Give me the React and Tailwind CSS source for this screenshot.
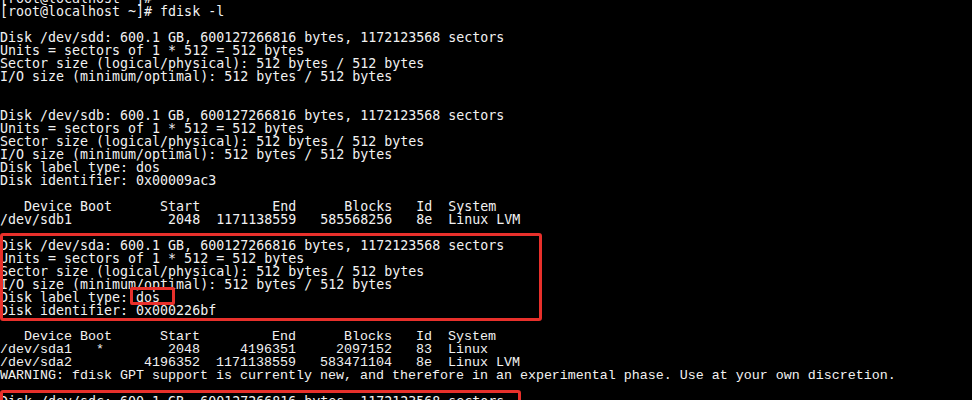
import React from "react";

const top = [
  "[root@localhost ~]#",
  "[root@localhost ~]# fdisk -l",
  "",
  "Disk /dev/sdd: 600.1 GB, 600127266816 bytes, 1172123568 sectors",
  "Units = sectors of 1 * 512 = 512 bytes",
  "Sector size (logical/physical): 512 bytes / 512 bytes",
  "I/O size (minimum/optimal): 512 bytes / 512 bytes",
  "",
  "",
  "Disk /dev/sdb: 600.1 GB, 600127266816 bytes, 1172123568 sectors",
  "Units = sectors of 1 * 512 = 512 bytes",
  "Sector size (logical/physical): 512 bytes / 512 bytes",
  "I/O size (minimum/optimal): 512 bytes / 512 bytes",
  "Disk label type: dos",
  "Disk identifier: 0x00009ac3",
  "",
  "   Device Boot      Start         End      Blocks   Id  System",
  "/dev/sdb1            2048  1171138559   585568256   8e  Linux LVM",
  "",
  "Disk /dev/sda: 600.1 GB, 600127266816 bytes, 1172123568 sectors",
  "Units = sectors of 1 * 512 = 512 bytes",
  "Sector size (logical/physical): 512 bytes / 512 bytes",
  "I/O size (minimum/optimal): 512 bytes / 512 bytes",
  "Disk label type: dos",
  "Disk identifier: 0x000226bf",
  "",
];

const narrow = [
  "   Device Boot      Start         End      Blocks   Id  System",
  "/dev/sda1   *        2048     4196351     2097152   83  Linux",
  "/dev/sda2         4196352  1171138559   583471104   8e  Linux LVM",
  "WARNING: fdisk GPT support is currently new, and therefore in an experimental phase. Use at your own discretion.",
];

const bottom = [
  "",
  "Disk /dev/sdc: 600.1 GB, 600127266816 bytes, 1172123568 sectors",
];

export default function App() {
  return (
    <div className="relative w-[972px] h-[400px] overflow-hidden bg-black text-[#f2f2f2]">
      <div className="mt-[-8px] flex flex-col">
        {top.map((l, i) => (
          <div
            key={"t" + i}
            className="h-[13px] leading-[13px] whitespace-pre text-[13.3px] font-['DejaVu_Sans_Mono',monospace]"
          >
            {l}
          </div>
        ))}
        {narrow.map((l, i) => (
          <div
            key={"n" + i}
            className="h-[13px] leading-[13px] whitespace-pre text-[13.33px] font-['Liberation_Mono',monospace]"
          >
            {l}
          </div>
        ))}
        {bottom.map((l, i) => (
          <div
            key={"b" + i}
            className="h-[13px] leading-[13px] whitespace-pre text-[13.3px] font-['DejaVu_Sans_Mono',monospace]"
          >
            {l}
          </div>
        ))}
      </div>
      <div className="absolute left-0 top-[233px] w-[542px] h-[88px] border-[3px] border-[#e8302b] rounded-[3px]" />
      <div className="absolute left-[130px] top-[287px] w-[45px] h-[18px] border-[3px] border-[#e8302b] rounded-[2px]" />
      <div className="absolute left-0 top-[390px] w-[521px] h-[30px] border-[3px] border-[#e8302b] rounded-[3px]" />
    </div>
  );
}
